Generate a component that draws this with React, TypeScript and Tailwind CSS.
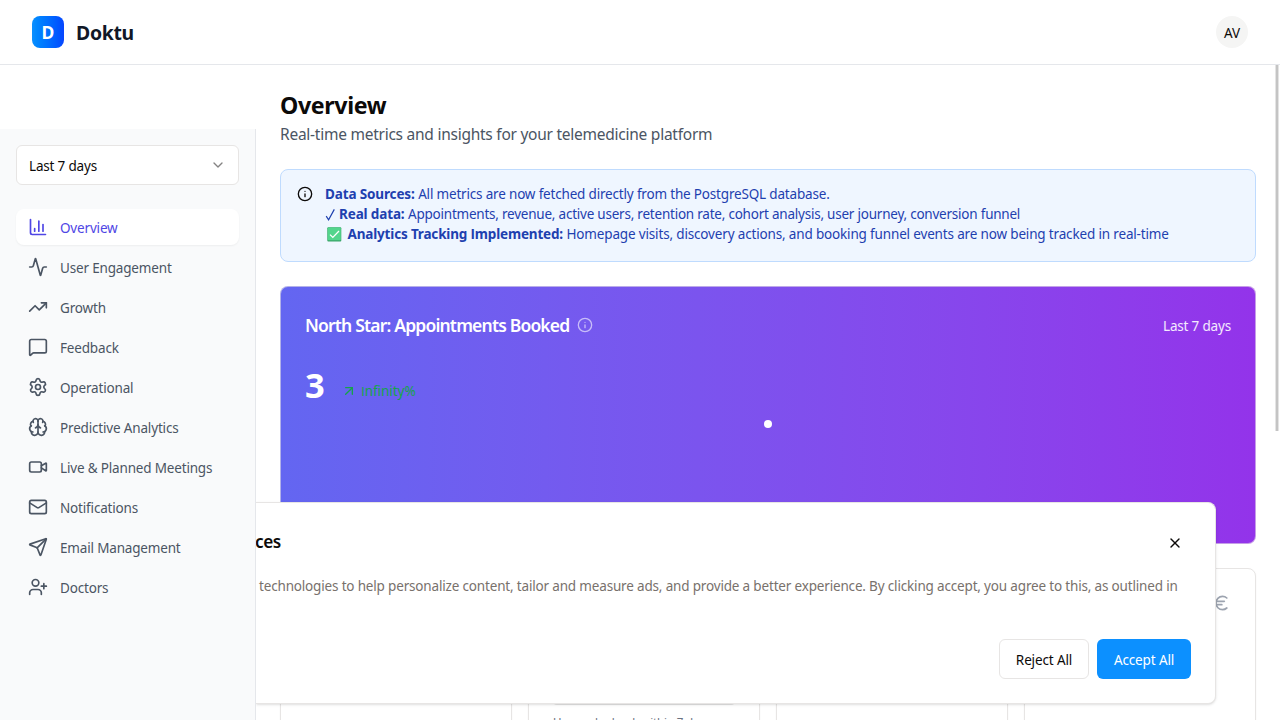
import type { ReactNode } from "react";
import {
  Activity,
  ArrowUpRight,
  Brain,
  ChevronDown,
  Euro,
  Info,
  Mail,
  MessageSquare,
  Send,
  Settings,
  TrendingUp,
  UserPlus,
  Video,
  X,
  type LucideIcon,
} from "lucide-react";

function BarChartIcon({ className }: { className?: string }) {
  return (
    <svg viewBox="0 0 24 24" fill="none" stroke="currentColor" strokeWidth="2" strokeLinecap="round" strokeLinejoin="round" className={className}>
      <path d="M3 3v16a2 2 0 0 0 2 2h16" />
      <path d="M18 17V9" />
      <path d="M13 17V5" />
      <path d="M8 17v-3" />
    </svg>
  );
}

const navItems: { label: string; icon: LucideIcon | typeof BarChartIcon; active?: boolean }[] = [
  { label: "Overview", icon: BarChartIcon, active: true },
  { label: "User Engagement", icon: Activity },
  { label: "Growth", icon: TrendingUp },
  { label: "Feedback", icon: MessageSquare },
  { label: "Operational", icon: Settings },
  { label: "Predictive Analytics", icon: Brain },
  { label: "Live & Planned Meetings", icon: Video },
  { label: "Notifications", icon: Mail },
  { label: "Email Management", icon: Send },
  { label: "Doctors", icon: UserPlus },
];

function Header() {
  return (
    <header className="flex h-[65px] shrink-0 items-center justify-between border-b border-[#e5e7eb] bg-white px-8">
      <div className="flex items-center gap-3">
        <div className="flex h-8 w-8 items-center justify-center rounded-lg bg-linear-to-r from-[#0c90ff] to-[#0a45ff] text-[17.5px] font-bold text-white">
          D
        </div>
        <span className="pt-px text-[19.4px] font-bold tracking-[-0.3px] text-[#111827]">Doktu</span>
      </div>
      <div className="flex h-8 w-8 items-center justify-center rounded-full bg-[#f5f5f4] pt-0.5 text-[13.5px] text-[#0c0a09]">AV</div>
    </header>
  );
}

function Sidebar() {
  return (
    <aside className="mt-16 flex w-64 shrink-0 flex-col border-r border-[#e5e7eb] bg-[#f9fafb] p-4">
      <button className="flex h-10 w-full shrink-0 items-center justify-between rounded-md border border-[#e7e5e4] bg-white px-3 text-[13.5px] tracking-[-0.18px] text-[#0c0a09]">
        <span className="pt-[3px]">Last 7 days</span>
        <ChevronDown className="h-4 w-4 opacity-50" />
      </button>
      <nav className="mt-6 flex flex-col gap-1">
        {navItems.map(({ label, icon: Icon, active }) => (
          <a
            key={label}
            className={
              active
                ? "flex h-9 items-center gap-3 rounded-lg bg-white px-3 text-[#4f46e5] shadow-xs"
                : "flex h-9 items-center gap-3 rounded-lg px-3 text-[#4b5563]"
            }
          >
            <Icon className="h-5 w-5 shrink-0" />
            <span className="pt-0.5 text-[13.5px] leading-5 tracking-[-0.17px]">{label}</span>
          </a>
        ))}
      </nav>
    </aside>
  );
}

function CheckMark() {
  return (
    <svg viewBox="0 0 11 14" className="mr-[3px] inline-block h-[14px] w-[11px] align-[-3px]" role="img" aria-label="Check">
      <path d="M1.2 8.2 3.6 11.8 9.3 1.4" fill="none" stroke="currentColor" strokeWidth="1.2" />
    </svg>
  );
}

function CheckEmoji() {
  return (
    <svg viewBox="0 0 15 15" className="mx-0.5 inline-block h-[15px] w-[15px] align-[-3px]" role="img" aria-label="Done">
      <rect x="0.3" y="0.3" width="14" height="14.2" rx="1" fill="#3aa56a" />
      <rect x="0.8" y="0.5" width="13" height="12.8" rx="0.8" fill="#53d58c" />
      <path d="M3 7.6 5.8 10.4 12 4" fill="none" stroke="#fff" strokeWidth="1.3" />
    </svg>
  );
}

function SansI() {
  return <span className="font-['Open_Sans',sans-serif] leading-none">I</span>;
}

function DataSources() {
  return (
    <div className="flex h-[93px] shrink-0 gap-3 rounded-lg border border-[#bfdbfe] bg-[#eff6ff] px-4 py-4">
      <Info className="h-4 w-4 shrink-0 text-[#0c0a09]" />
      <div className="-mt-0.5 text-[13.5px] leading-5 whitespace-nowrap text-[#1e40af]">
        <p className="h-5">
          <strong className="tracking-[-0.14px]">Data Sources:</strong>{" "}
          <span className="tracking-[-0.18px]">All metrics are now fetched directly from the PostgreSQL database.</span>
        </p>
        <p className="h-5">
          <CheckMark />
          <strong className="tracking-[-0.14px]">Real data:</strong>{" "}
          <span className="tracking-[-0.225px]">
            Appointments, revenue, active users, retention rate, cohort analysis, user journey, conversion funnel
          </span>
        </p>
        <p className="h-5">
          <CheckEmoji />{" "}
          <strong className="tracking-[-0.17px]">
            Analytics Tracking <SansI />mplemented:
          </strong>{" "}
          <span className="tracking-[-0.16px]">
            Homepage visits, discovery actions, and booking funnel events are now being tracked in real-time
          </span>
        </p>
      </div>
    </div>
  );
}

function NorthStar() {
  return (
    <section className="relative h-[258px] shrink-0 rounded-lg border border-[#e7e5e4]/60 bg-linear-to-r from-[#6366f1] to-[#9333ea] bg-origin-border px-6 pt-6 text-white">
      <div className="flex h-7 items-center justify-between">
        <div className="flex items-center gap-2">
          <h2 className="text-[17.5px] font-semibold tracking-[-0.82px]">North Star: Appointments Booked</h2>
          <Info className="h-4 w-4 opacity-60" />
        </div>
        <span className="pt-0.5 text-[13.5px] tracking-[-0.18px] text-white/90">Last 7 days</span>
      </div>
      <div className="mt-[26px] flex h-10">
        <span className="w-5 text-[34.5px] leading-10 font-bold">3</span>
        <div className="mt-4 ml-4 flex h-5 items-center gap-1 text-[#16a34a]">
          <ArrowUpRight className="mb-px h-4 w-4" />
          <span className="text-[13.5px] leading-5 tracking-[-0.05px]">
            <SansI />nfinity%
          </span>
        </div>
      </div>
      <span className="absolute top-[133px] left-[483px] h-2 w-2 rounded-full bg-white" />
    </section>
  );
}

function MetricCard({ children }: { children?: ReactNode }) {
  return <div className="h-[220px] rounded-lg border border-[#e7e5e4] bg-white p-6 shadow-xs">{children}</div>;
}

function ConsentPanel() {
  return (
    <div className="absolute top-[437px] left-0 h-[202px] w-[960px] rounded-r-lg border border-l-0 border-[#e7e5e4] bg-white shadow-sm">
      <div className="flex h-full flex-col pr-6">
        <div className="mt-5 flex h-10 items-center justify-between pr-2">
          <h3 className="-ml-px pb-[3px] text-[17.2px] font-semibold tracking-[-0.45px] text-[#0c0a09]">ces</h3>
          <X className="h-4 w-4 text-[#0c0a09]" />
        </div>
        <p className="mt-[13px] ml-[3px] text-[13.5px] leading-5 tracking-[-0.17px] whitespace-nowrap text-[#78716c]">
          technologies to help personalize content, tailor and measure ads, and provide a better experience. By clicking accept, you
          agree to this, as outlined in
        </p>
        <div className="mt-auto mb-6 flex justify-end gap-2 text-[13.5px] tracking-[-0.13px]">
          <button className="h-10 w-[90px] rounded-md border border-[#e7e5e4] bg-white pt-0.5 text-[#0c0a09]">Reject All</button>
          <button className="h-10 w-[94px] rounded-md bg-[#0c90ff] pt-0.5 text-white">Accept All</button>
        </div>
      </div>
    </div>
  );
}

export default function App() {
  return (
    <div className="flex h-screen flex-col overflow-hidden bg-white font-['Noto_Sans',sans-serif]">
      <Header />
      <div className="flex min-h-0 flex-1">
        <Sidebar />
        <div className="relative flex min-w-0 flex-1 overflow-hidden">
          <main className="flex min-w-0 flex-1 flex-col pt-6 pr-6 pl-6">
            <h1 className="text-[23.2px] leading-8 font-bold tracking-[-0.38px] text-[#0c0a09]">Overview</h1>
            <p className="mb-6 h-6 text-[15.5px] leading-[26px] tracking-[-0.25px] text-[#4b5563]">
              Real-time metrics and insights for your telemedicine platform
            </p>
            <DataSources />
            <div className="h-6 shrink-0" />
            <NorthStar />
            <div className="mt-6 grid shrink-0 grid-cols-4 gap-4">
              <MetricCard />
              <MetricCard>
                <div className="mt-[104px] h-2 w-[182px] rounded-full bg-[#e7e7e7]" />
                <p className="mt-[9px] text-[11.6px] leading-4 tracking-[-0.16px] text-[#6b7280]">Users who book within 7 days</p>
              </MetricCard>
              <MetricCard />
              <MetricCard>
                <Euro className="ml-auto h-5 w-5 text-[#9ca3af]" />
              </MetricCard>
            </div>
          </main>
          <ConsentPanel />
          <div className="absolute top-0 right-px h-[366px] w-1 border-x border-x-[#e4e4e4] bg-[#c4c4c4]" />
        </div>
      </div>
    </div>
  );
}
